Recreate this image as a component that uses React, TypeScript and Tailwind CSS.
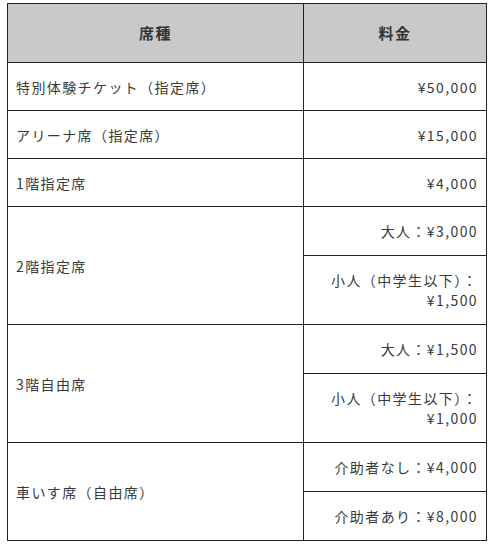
const font = { fontFamily: '"Noto Sans CJK JP", "Noto Sans", sans-serif' };

type Row = { seat: string; prices: string[] };

const rows: Row[] = [
  { seat: "特別体験チケット（指定席）", prices: ["¥50,000"] },
  { seat: "アリーナ席（指定席）", prices: ["¥15,000"] },
  { seat: "1階指定席", prices: ["¥4,000"] },
  { seat: "2階指定席", prices: ["大人：¥3,000", "小人（中学生以下）：¥1,500"] },
  { seat: "3階自由席", prices: ["大人：¥1,500", "小人（中学生以下）：¥1,000"] },
  { seat: "車いす席（自由席）", prices: ["介助者なし：¥4,000", "介助者あり：¥8,000"] },
];

const cell = "border border-[#222] px-[8px] text-[14px] leading-[20px] tracking-[1.4px] text-[#3a3a3a]";

export default function App() {
  return (
    <div className="bg-white w-[493px] h-[545px] pt-[3px] pl-[7px]" style={font}>
      <table className="border-collapse w-[480px] table-fixed">
        <colgroup>
          <col className="w-[296px]" />
          <col />
        </colgroup>
        <thead>
          <tr className="bg-[#c9c9c9]">
            <th className="border border-[#222] h-[59px] text-[15px] font-bold tracking-[1.4px] text-[#333] text-center">席種</th>
            <th className="border border-[#222] h-[59px] text-[15px] font-bold tracking-[1.4px] text-[#333] text-center">料金</th>
          </tr>
        </thead>
        <tbody>
          {rows.map((r) => {
            const pad = r.prices.length > 1 ? "py-[14px]" : "py-[13.5px]";
            return r.prices.map((p, i) => (
              <tr key={r.seat + i}>
                {i === 0 && (
                  <td rowSpan={r.prices.length} className={`${cell} ${pad} text-left align-middle`}>
                    {r.seat}
                  </td>
                )}
                <td className={`${cell} ${pad} text-right align-middle`}>{p}</td>
              </tr>
            ));
          })}
        </tbody>
      </table>
    </div>
  );
}
